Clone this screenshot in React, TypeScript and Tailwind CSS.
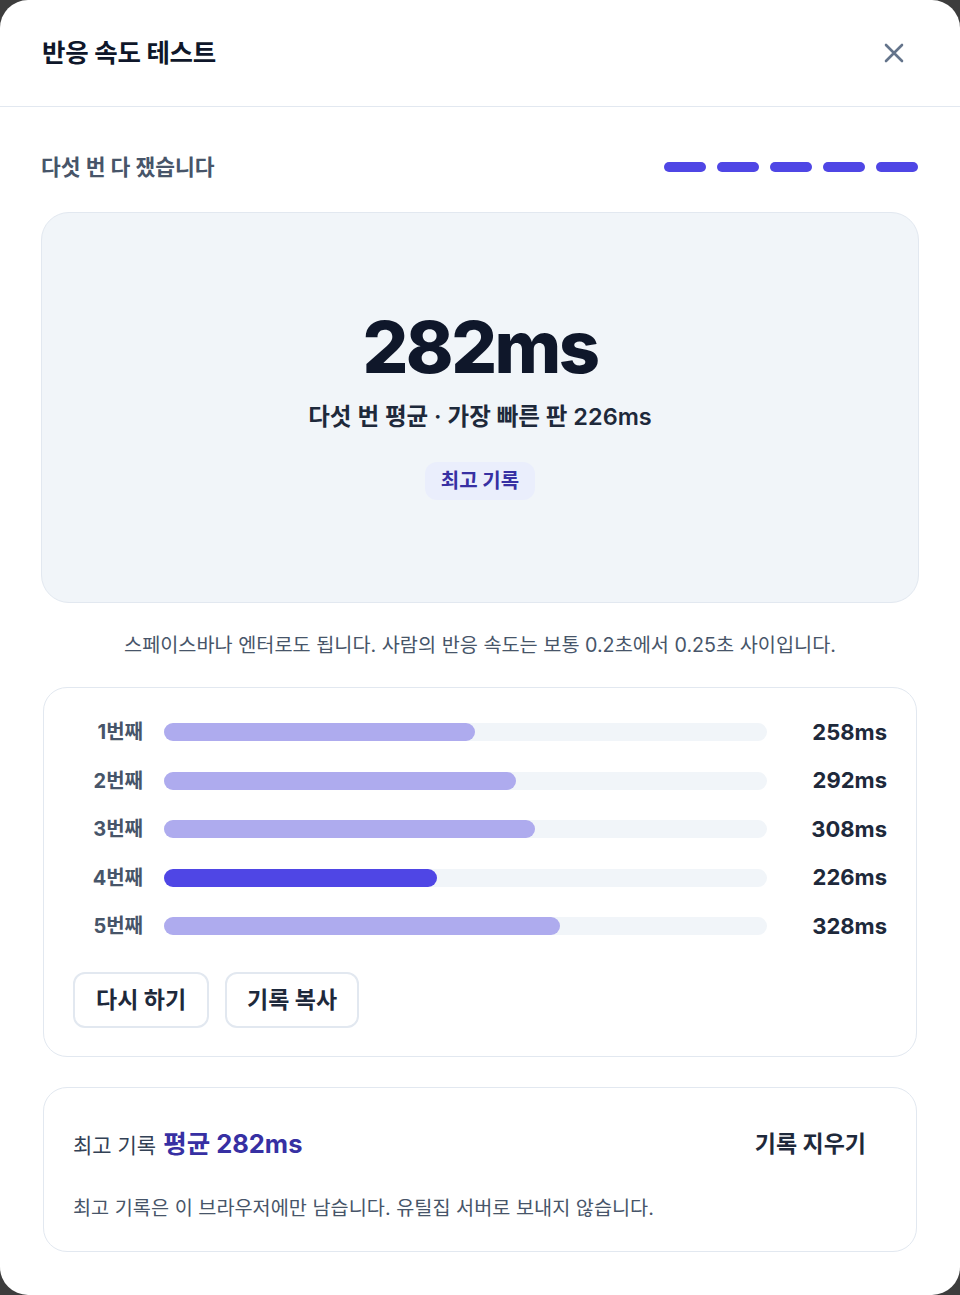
import React from "react";

const trials = [
  { label: "1번째", ms: 258, best: false },
  { label: "2번째", ms: 292, best: false },
  { label: "3번째", ms: 308, best: false },
  { label: "4번째", ms: 226, best: true },
  { label: "5번째", ms: 328, best: false },
];

const font = "font-['Inter','Noto_Sans_CJK_KR',sans-serif]";

export default function App() {
  return (
    <div className={`min-h-[1295px] w-[960px] bg-[#3d3d3d] ${font}`}>
      <div className="flex h-[1295px] w-[960px] flex-col rounded-[28px] bg-white">
        {/* Header */}
        <div className="flex h-[107px] shrink-0 items-center justify-between border-b border-[#e2e8f0] pl-[42px] pr-[54px]">
          <h1 className="text-[25.5px] font-bold tracking-[-0.01em] text-[#0f172a]">반응 속도 테스트</h1>
          <button className="flex h-[24px] w-[24px] items-center justify-center text-[#64748b]">
            <svg width="20" height="20" viewBox="0 0 20 20" fill="none" stroke="currentColor" strokeWidth="2.6" strokeLinecap="round">
              <path d="M2 2 L18 18 M18 2 L2 18" />
            </svg>
          </button>
        </div>

        <div className="flex flex-col px-[41px]">
          {/* Status row */}
          <div className="mt-[44px] flex h-[32px] items-center justify-between">
            <h2 className="text-[21.5px] font-bold text-[#475569]">다섯 번 다 쟀습니다</h2>
            <div className="flex gap-[11px] pr-[1px]">
              {[0, 1, 2, 3, 4].map((i) => (
                <span key={i} className="h-[10px] w-[42px] rounded-full bg-[#4f46e5]" />
              ))}
            </div>
          </div>

          {/* Result card */}
          <div className="mt-[29px] flex h-[391px] flex-col items-center rounded-[28px] border border-[#e2e8f0] bg-[#f1f5f9] pt-[94px]">
            <div className="text-[72px] font-extrabold leading-[80px] tracking-[-0.035em] text-[#0f172a]">282ms</div>
            <div className="mt-[14px] text-[23.5px] font-semibold leading-[32px] text-[#1e293b]">다섯 번 평균 · 가장 빠른 판 226ms</div>
            <div className="mt-[29px] rounded-[12px] bg-[#eaeefc] px-[16px] text-[20px] font-bold leading-[38px] text-[#3730a3]">최고 기록</div>
          </div>

          {/* Help text */}
          <p className="mt-[28px] text-center text-[19.7px] leading-[28px] text-[#475569]">
            스페이스바나 엔터로도 됩니다. 사람의 반응 속도는 보통 0.2초에서 0.25초 사이입니다.
          </p>

          {/* Trials card */}
          <div className="mx-[2px] mt-[28px] flex flex-col rounded-[24px] border border-[#e2e8f0] bg-white px-[29px] pb-[28px] pt-[28px]">
            <div className="flex flex-col gap-[16.5px]">
              {trials.map((t) => (
                <div key={t.label} className="flex h-[32px] items-center">
                  <div className="w-[70px] text-right text-[20px] font-bold text-[#475569]">{t.label}</div>
                  <div className="ml-[21px] h-[18px] w-[603px] rounded-full bg-[#f1f5f9]">
                    <div
                      className={`h-full rounded-full ${t.best ? "bg-[#4f46e5]" : "bg-[#aeabee]"}`}
                      style={{ width: `${(t.ms / 500) * 100}%` }}
                    />
                  </div>
                  <div className="flex-1 text-right text-[22px] font-bold text-[#1e293b]">{t.ms}ms</div>
                </div>
              ))}
            </div>
            <div className="mt-[30px] flex gap-[16px]">
              <button className="h-[56px] rounded-[12px] border-2 border-[#e2e8f0] px-[21px] text-[23px] font-bold text-[#1e293b]">다시 하기</button>
              <button className="h-[56px] rounded-[12px] border-2 border-[#e2e8f0] px-[20px] text-[23px] font-bold text-[#1e293b]">기록 복사</button>
            </div>
          </div>

          {/* Best card */}
          <div className="mx-[2px] mt-[30px] flex flex-col rounded-[24px] border border-[#e2e8f0] bg-white pb-[29px] pl-[29px] pr-[50px] pt-[40px]">
            <div className="flex h-[32px] items-center justify-between">
              <div className="flex items-baseline">
                <span className="text-[21px] text-[#334155]">최고 기록</span>
                <span className="ml-[7px] text-[25.5px] font-bold text-[#3730a3]">평균 282ms</span>
              </div>
              <button className="text-[23px] font-bold text-[#1e293b]">기록 지우기</button>
            </div>
            <p className="mt-[34px] text-[19.7px] leading-[28px] text-[#475569]">
              최고 기록은 이 브라우저에만 남습니다. 유틸집 서버로 보내지 않습니다.
            </p>
          </div>
        </div>
      </div>
    </div>
  );
}
